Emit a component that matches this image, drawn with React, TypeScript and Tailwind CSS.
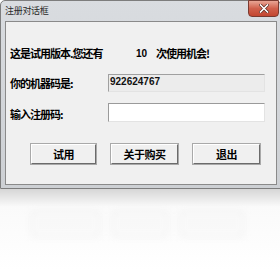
import React from "react";

const cjk = { fontFamily: '"Noto Sans CJK SC", "Noto Sans", sans-serif' };

function Btn({ label, w }: { label: string; w: string }) {
  return (
    <div
      className={`${w} h-[20px] flex items-center justify-center bg-[#f0f0f0] border border-t-[#ffffff] border-l-[#ffffff] border-b-[#6b6b6b] border-r-[#6b6b6b] shadow-[0_0_0_1px_#a9a9a9] text-[11px] font-bold text-black tracking-[-0.5px]`}
      style={cjk}
    >
      {label}
    </div>
  );
}

function GhostBtn({ w }: { w: string }) {
  return <div className={`${w} h-[26px] border border-[#d0d0d0] bg-[#f6f6f6] blur-[3px] opacity-40`} />;
}

export default function App() {
  return (
    <div className="w-[280px] h-[270px] bg-white overflow-hidden flex flex-col">
      {/* window */}
      <div className="relative w-[281px] h-[189px] bg-gradient-to-b from-[#d9dce0] to-[#cdd0d4] border border-[#7d7d7d] rounded-t-[5px] flex flex-col shrink-0">
        {/* title bar */}
        <div className="h-[20px] flex items-center pl-[4px] text-[9px] text-[#2a2a2a] tracking-[-0.3px]" style={cjk}>
          注册对话框
        </div>
        {/* close button */}
        <div className="absolute top-[-1px] right-[1px] w-[31px] h-[17px] rounded-b-[4px] border border-[#7a3a30] bg-gradient-to-b from-[#e8a595] via-[#d0604c] to-[#c34630] flex items-center justify-center">
          <svg width="10" height="9" viewBox="0 0 10 9">
            <path d="M1.5 1 L8.5 8 M8.5 1 L1.5 8" stroke="#5a2a20" strokeWidth="3" strokeLinecap="square" />
            <path d="M1.5 1 L8.5 8 M8.5 1 L1.5 8" stroke="#ffffff" strokeWidth="1.6" strokeLinecap="square" />
          </svg>
        </div>
        {/* client */}
        <div className="ml-[4px] mr-[3px] h-[164px] bg-[#f0f0f0] border border-[#8a8a8a] flex flex-col text-black" style={cjk}>
          <div className="pt-[24px] pl-[4px] h-[14px] box-content flex items-center text-[11px] font-bold tracking-[-1px]">
            <span className="w-[126px]">这是试用版本.您还有</span>
            <span className="w-[20px] tracking-normal" style={{ fontFamily: '"Liberation Sans", sans-serif', fontSize: "10px" }}>10</span>
            <span>次使用机会!</span>
          </div>
          <div className="mt-[14px] pl-[4px] h-[18px] flex items-center">
            <span className="w-[98px] text-[11px] font-bold tracking-[-1px]">你的机器码是:</span>
            <div className="w-[157px] h-[18px] bg-[#ececec] border border-t-[#a0a0a0] border-l-[#a0a0a0] border-b-[#e3e3e3] border-r-[#e3e3e3] flex items-start pl-[1px] pt-[1px]">
              <span className="text-[10px] font-bold leading-[12px] text-[#111]" style={{ fontFamily: '"Liberation Sans", sans-serif' }}>
                922624767
              </span>
            </div>
          </div>
          <div className="mt-[11px] pl-[4px] h-[19px] flex items-center">
            <span className="w-[98px] text-[11px] font-bold tracking-[-1px] pt-[3px]">输入注册码:</span>
            <div className="w-[157px] h-[19px] bg-white border border-t-[#9a9a9a] border-l-[#9a9a9a] border-b-[#e3e3e3] border-r-[#e3e3e3]" />
          </div>
          <div className="mt-[22px] pl-[25px] flex gap-[15px]">
            <Btn label="试用" w="w-[65px]" />
            <Btn label="关于购买" w="w-[67px]" />
            <Btn label="退出" w="w-[67px]" />
          </div>
        </div>
      </div>
      {/* reflection */}
      <div className="flex-1 bg-gradient-to-b from-[#d6d6d6] via-[#fafafa] via-[22%] to-white flex flex-col">
        <div className="mt-[22px] pl-[31px] flex gap-[12px]">
          <GhostBtn w="w-[69px]" />
          <GhostBtn w="w-[56px]" />
          <GhostBtn w="w-[64px]" />
        </div>
      </div>
    </div>
  );
}
